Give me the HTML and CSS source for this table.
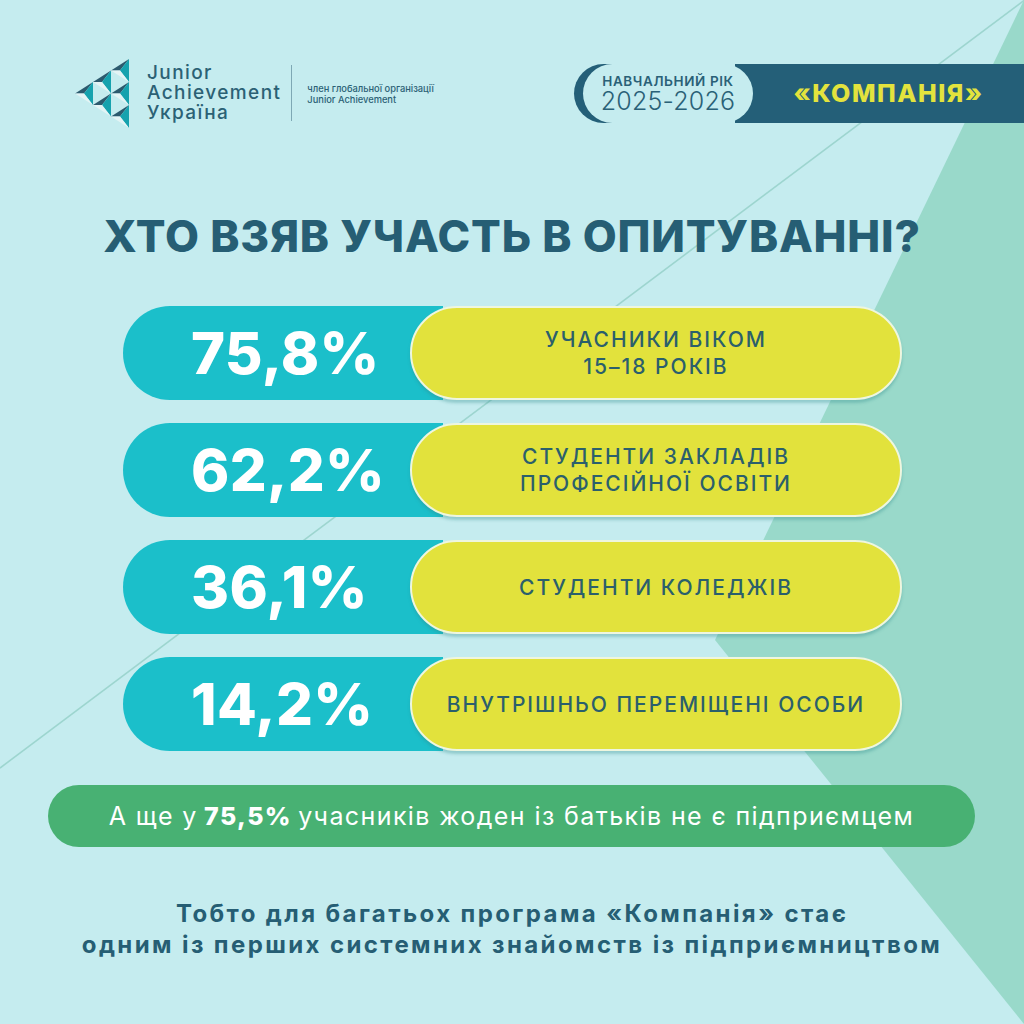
FILE: index.html
```
<!DOCTYPE html>
<html lang="uk">
<head>
<meta charset="utf-8">
<title>Хто взяв участь в опитуванні?</title>
<link rel="stylesheet" href="styles.css">
</head>
<body>
<div class="page">
  <svg class="deco" viewBox="0 0 1024 1024" width="1024" height="1024" aria-hidden="true">
    <polygon points="1024,0 715,640 1024,1024" fill="#99d9ca"/>
    <line x1="1026" y1="-1" x2="0" y2="768" stroke="#9dd5cf" stroke-width="1.6"/>
  </svg>

  <header class="top">
    <div class="brand">
      <svg class="logo" viewBox="0 0 56 72" width="56" height="72" aria-hidden="true">
        <g class="cell">
          <polygon points="36,13.5 54,2 45,13.5" fill="#2c5a6e"/>
          <polygon points="54,2 54,25 45,13.5" fill="#16a2ae"/>
          <polygon points="36,13.5 45,13.5 54,25" fill="#e3f4f5"/>
        </g>
        <g class="cell">
          <polygon points="36,36.5 54,25 45,36.5" fill="#2c5a6e"/>
          <polygon points="54,25 54,48 45,36.5" fill="#16a2ae"/>
          <polygon points="36,36.5 45,36.5 54,48" fill="#e3f4f5"/>
        </g>
        <g class="cell">
          <polygon points="36,59.5 54,48 45,59.5" fill="#2c5a6e"/>
          <polygon points="54,48 54,71 45,59.5" fill="#16a2ae"/>
          <polygon points="36,59.5 45,59.5 54,71" fill="#e3f4f5"/>
        </g>
        <g class="cell">
          <polygon points="18,25 36,13.5 27,25" fill="#2c5a6e"/>
          <polygon points="36,13.5 36,36.5 27,25" fill="#16a2ae"/>
          <polygon points="18,25 27,25 36,36.5" fill="#e3f4f5"/>
        </g>
        <g class="cell">
          <polygon points="18,48 36,36.5 27,48" fill="#2c5a6e"/>
          <polygon points="36,36.5 36,59.5 27,48" fill="#16a2ae"/>
          <polygon points="18,48 27,48 36,59.5" fill="#e3f4f5"/>
        </g>
        <g class="cell">
          <polygon points="0,36.5 18,25 9,36.5" fill="#2c5a6e"/>
          <polygon points="18,25 18,48 9,36.5" fill="#16a2ae"/>
          <polygon points="0,36.5 9,36.5 18,48" fill="#e3f4f5"/>
        </g>
      </svg>
      <div class="brand-name">
        <span class="brand-line">Junior</span>
        <span class="brand-line">Achievement</span>
        <span class="brand-line">Україна</span>
      </div>
      <div class="brand-divider"></div>
      <div class="brand-member">
        <span class="member-line">член глобальної організації</span>
        <span class="member-line">Junior Achievement</span>
      </div>
    </div>

    <div class="program">
      <div class="year">
        <span class="year-label">НАВЧАЛЬНИЙ РІК</span>
        <span class="year-value">2025-2026</span>
      </div>
      <div class="program-name">«КОМПАНІЯ»</div>
    </div>
  </header>

  <h1 class="title">ХТО ВЗЯВ УЧАСТЬ В ОПИТУВАННІ?</h1>

  <ul class="stats">
    <li class="stat">
      <div class="stat-value">75,8%</div>
      <div class="stat-label">УЧАСНИКИ ВІКОМ<br>15–18 РОКІВ</div>
    </li>
    <li class="stat">
      <div class="stat-value">62,2%</div>
      <div class="stat-label">СТУДЕНТИ ЗАКЛАДІВ<br>ПРОФЕСІЙНОЇ ОСВІТИ</div>
    </li>
    <li class="stat">
      <div class="stat-value">36,1%</div>
      <div class="stat-label">СТУДЕНТИ КОЛЕДЖІВ</div>
    </li>
    <li class="stat">
      <div class="stat-value">14,2%</div>
      <div class="stat-label">ВНУТРІШНЬО ПЕРЕМІЩЕНІ ОСОБИ</div>
    </li>
  </ul>

  <div class="note">А ще у <strong>75,5%</strong> учасників жоден із батьків не є підприємцем</div>

  <p class="summary">Тобто для багатьох програма «Компанія» стає<br>одним із перших системних знайомств із підприємництвом</p>
</div>
</body>
</html>
```
FILE: styles.css
```
* { box-sizing: border-box; }

html, body {
  margin: 0;
  padding: 0;
}

body {
  background: #c5ecef;
  font-family: Inter, "Open Sans", "Noto Sans", sans-serif;
  color: #265e74;
}

.page {
  position: relative;
  width: 1024px;
  height: 1024px;
  overflow: hidden;
  background: #c5ecef;
}

.deco {
  position: absolute;
  left: 0;
  top: 0;
  z-index: 0;
}

.top, .title, .stats, .note, .summary {
  position: relative;
  z-index: 1;
}

/* Header */
.top {
  display: flex;
  align-items: center;
  justify-content: space-between;
  padding: 58px 0 0 75px;
  height: 128px;
}

.brand {
  display: flex;
  align-items: center;
  height: 70px;
}

.logo {
  display: block;
  flex: none;
}

.brand-name {
  margin-left: 16px;
  display: flex;
  flex-direction: column;
  font-size: 19px;
  font-weight: 500;
  letter-spacing: 1.4px;
  color: #2b6175;
}

.brand-line {
  display: block;
  height: 20px;
  line-height: 20px;
  overflow: visible;
}

.brand-divider {
  width: 1px;
  height: 56px;
  margin-left: 10px;
  background: #7ea8b4;
}

.brand-member {
  margin-left: 15px;
  margin-top: 2px;
  display: flex;
  flex-direction: column;
  font-size: 9.3px;
  font-weight: 500;
  color: #2b6175;
}

.member-line {
  display: block;
  line-height: 11.5px;
}

.program {
  display: flex;
  align-items: center;
}

.year {
  position: relative;
  z-index: 2;
  width: 170px;
  height: 59px;
  margin-left: 9px;
  border-radius: 30px;
  background: #c5ecef;
  box-shadow: -9px 0 0 0 #245f78;
  display: flex;
  flex-direction: column;
  align-items: center;
  justify-content: center;
  color: #2a6177;
}

.year-label {
  font-size: 13.5px;
  line-height: 17px;
  font-weight: 600;
  letter-spacing: 0.6px;
}

.year-value {
  font-size: 25px;
  line-height: 23px;
  font-weight: 300;
  letter-spacing: 0.2px;
}

.program-name {
  position: relative;
  z-index: 1;
  width: 289px;
  height: 59px;
  margin-left: -18px;
  padding-left: 18px;
  background: #245f78;
  color: #e3e33d;
  font-size: 25px;
  font-weight: 800;
  letter-spacing: 1.5px;
  display: flex;
  align-items: center;
  justify-content: center;
}

/* Title */
.title {
  margin: 82px 0 0;
  text-align: center;
  font-size: 44px;
  line-height: 52px;
  font-weight: 800;
  letter-spacing: 0.8px;
  color: #265e74;
}

/* Stats */
.stats {
  list-style: none;
  margin: 44px 0 0;
  padding: 0 0 0 123px;
  display: flex;
  flex-direction: column;
  gap: 23px;
}

.stat {
  display: flex;
  align-items: stretch;
  height: 94px;
}

.stat-value {
  width: 320px;
  flex: none;
  border-radius: 47px 0 0 47px;
  background: #1bbfca;
  color: #ffffff;
  font-size: 58px;
  font-weight: 800;
  letter-spacing: 0.3px;
  padding-left: 68px;
  display: flex;
  align-items: center;
}

.stat-label {
  width: 492px;
  flex: none;
  margin-left: -33px;
  border-radius: 47px;
  background: #e2e23c;
  border: 2px solid #eef6df;
  box-shadow: 0 3px 3px rgba(48, 140, 140, 0.35);
  color: #2b5f6c;
  font-size: 21px;
  line-height: 27px;
  font-weight: 500;
  letter-spacing: 2px;
  text-align: center;
  display: flex;
  align-items: center;
  justify-content: center;
}

/* Note */
.note {
  margin: 34px 0 0 48px;
  width: 927px;
  height: 62px;
  border-radius: 31px;
  background: #48b173;
  color: #ffffff;
  font-size: 25px;
  font-weight: 400;
  letter-spacing: 1.4px;
  display: flex;
  align-items: center;
  justify-content: center;
}

.note strong {
  font-weight: 800;
  margin: 0 0.25em;
}

/* Summary */
.summary {
  margin: 51px 0 0;
  text-align: center;
  font-size: 24px;
  line-height: 31px;
  font-weight: 700;
  letter-spacing: 2.4px;
  color: #265e74;
}
```
